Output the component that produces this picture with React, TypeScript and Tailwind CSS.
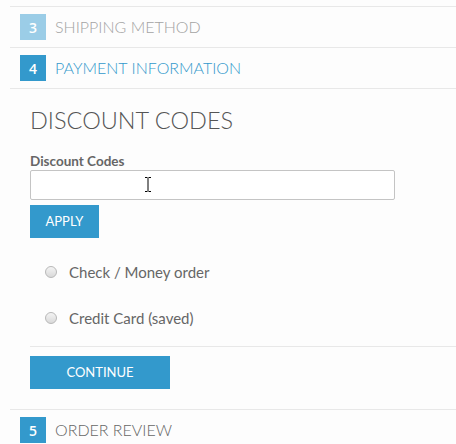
import React from "react";

function StepHeader({ num, title, tone }: { num: number; title: string; tone: "done" | "active" | "todo" }) {
  const boxClass =
    tone === "done" ? "bg-[#9bcde7]" : "bg-[#3399cc]";
  const textClass =
    tone === "done" ? "text-[#a3a3a3]" : tone === "active" ? "text-[#3399cc]" : "text-[#666666]";
  return (
    <div className="flex items-center gap-[9px] border-t border-[#e8e8e8] py-[7px] pl-[10px]">
      <div
        className={`flex h-[26px] w-[26px] items-center justify-center text-[14px] font-semibold text-white ${boxClass}`}
        style={{ fontFamily: '"Open Sans", sans-serif' }}
      >
        {num}
      </div>
      <div className={`text-[16px] font-light ${textClass}`}>{title}</div>
    </div>
  );
}

function Radio({ label }: { label: string }) {
  return (
    <label className="flex h-[46px] items-center gap-[12px] pl-[15px]">
      <span className="h-[12px] w-[12px] rounded-full border border-[#b8b8b8] bg-gradient-to-b from-[#f4f4f4] to-[#d9d9d9]" />
      <span className="text-[15px] text-[#666666]">{label}</span>
    </label>
  );
}

export default function App() {
  return (
    <div className="min-h-[444px] w-[456px] bg-[#fdfdfd] pl-[10px] pt-[6px]" style={{ fontFamily: "Lato, sans-serif" }}>
      <StepHeader num={3} title="SHIPPING METHOD" tone="done" />
      <StepHeader num={4} title="PAYMENT INFORMATION" tone="active" />
      <div className="border-t border-[#e8e8e8] pl-[20px] pt-[14px]">
        <h2 className="text-[23.5px] font-light leading-[34px] text-[#555555]">DISCOUNT CODES</h2>
        <div className="mt-[16px] text-[13.5px] font-bold leading-[16px] text-[#666666]">Discount Codes</div>
        <div className="relative mt-[1px] h-[30px] w-[365px] rounded-[2px] border border-[#c4c4c4] bg-white">
          <svg className="absolute left-[112px] top-[6px]" width="10" height="15" viewBox="0 0 10 15">
            <path d="M2 0.5h2.5M5.5 0.5h2.5M5 1v13M2 14.5h2.5M5.5 14.5h2.5" stroke="#000" strokeWidth="1" fill="none" />
          </svg>
        </div>
        <button className="mt-[5px] h-[33px] w-[69px] bg-[#3399cc] text-[13px] text-white">APPLY</button>
        <div className="mt-[11px]">
          <Radio label="Check / Money order" />
          <Radio label="Credit Card (saved)" />
        </div>
        <div className="mt-[5px] border-t border-[#e8e8e8] pt-[9px] pb-[20px]">
          <button className="h-[33px] w-[140px] bg-[#3399cc] text-[13px] text-white">CONTINUE</button>
        </div>
      </div>
      <StepHeader num={5} title="ORDER REVIEW" tone="todo" />
    </div>
  );
}
